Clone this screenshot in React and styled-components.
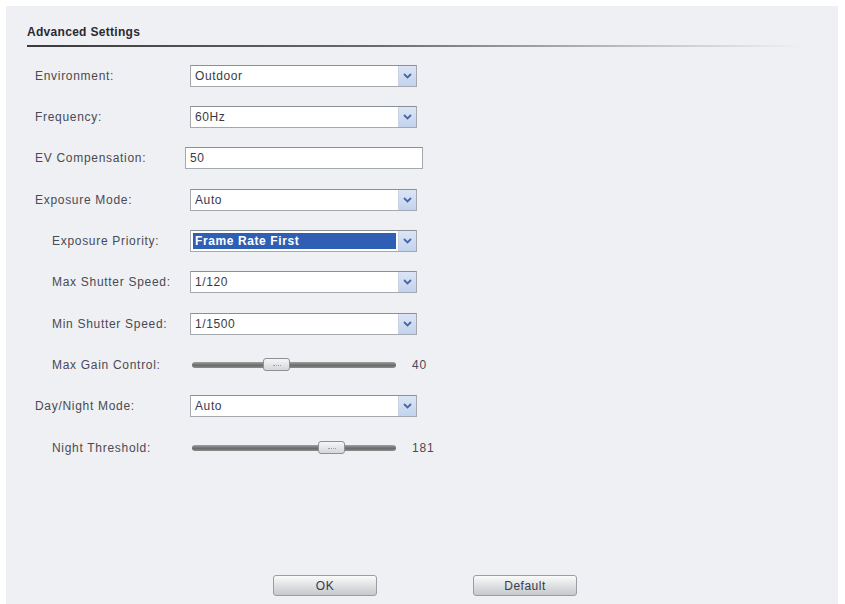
import React from 'react'
import styled, { createGlobalStyle } from 'styled-components'

const GlobalStyle = createGlobalStyle`
  html, body {
    margin: 0;
    padding: 0;
    background: #ffffff;
  }
  body {
    font-family: "Liberation Sans", Arial, sans-serif;
    color: #3a3a40;
  }
`

const fields = [
  { label: 'Environment:', type: 'select', value: 'Outdoor' },
  { label: 'Frequency:', type: 'select', value: '60Hz' },
  { label: 'EV Compensation:', type: 'input', value: '50' },
  { label: 'Exposure Mode:', type: 'select', value: 'Auto' },
  { label: 'Exposure Priority:', type: 'select', value: 'Frame Rate First', sub: true, active: true },
  { label: 'Max Shutter Speed:', type: 'select', value: '1/120', sub: true },
  { label: 'Min Shutter Speed:', type: 'select', value: '1/1500', sub: true },
  { label: 'Max Gain Control:', type: 'slider', value: 40, max: 100, sub: true },
  { label: 'Day/Night Mode:', type: 'select', value: 'Auto' },
  { label: 'Night Threshold:', type: 'slider', value: 181, max: 255, sub: true },
]

const Chevron = () => (
  <svg width="9" height="6" viewBox="0 0 9 6">
    <path d="M1 1 L4.5 4.5 L8 1" fill="none" stroke="#4a66a6" strokeWidth="1.8" />
  </svg>
)

const Dropdown = ({ value, active }) => (
  <Select>
    <SelectText $active={active}>{value}</SelectText>
    <SelectButton>
      <Chevron />
    </SelectButton>
  </Select>
)

const TRACK = 204
const THUMB = 27

const Slider = ({ value, max }) => (
  <SliderWrap>
    <Track>
      <Thumb style={{ left: Math.round((value / max) * (TRACK - THUMB)) }} />
    </Track>
    <SliderValue>{value}</SliderValue>
  </SliderWrap>
)

export default function App() {
  return (
    <>
      <GlobalStyle />
      <Panel>
        <Header>Advanced Settings</Header>
        <Form>
          {fields.map((f, i) => (
            <Row key={i}>
              <Label $sub={f.sub}>{f.label}</Label>
              {f.type === 'select' && <Dropdown value={f.value} active={f.active} />}
              {f.type === 'input' && <TextInput defaultValue={f.value} />}
              {f.type === 'slider' && <Slider value={f.value} max={f.max} />}
            </Row>
          ))}
        </Form>
        <Buttons>
          <Button>OK</Button>
          <Button>Default</Button>
        </Buttons>
      </Panel>
    </>
  )
}

const Panel = styled.div`
  margin: 6px 7px 0 6px;
  height: 598px;
  background: #eef0f3;
  padding: 19px 0 0 21px;
  box-sizing: border-box;
`

const Header = styled.div`
  width: 774px;
  padding: 0 0 6px 0;
  font-size: 12px;
  font-weight: bold;
  line-height: 14px;
  letter-spacing: 0.3px;
  color: #2a2a30;
  border-bottom: 2px solid transparent;
  border-image: linear-gradient(to right, #3a3a3a 0%, #6a6a6a 45%, #c0c4c8 80%, #eef0f3 100%) 1;
`

const Form = styled.div`
  display: flex;
  flex-direction: column;
  margin-top: 8px;
  padding-left: 8px;
`

const Row = styled.div`
  display: grid;
  grid-template-columns: 153px auto;
  align-items: center;
  height: 41.35px;
`

const Label = styled.div`
  font-size: 12px;
  letter-spacing: 0.7px;
  color: #4a4a54;
  padding-left: ${(p) => (p.$sub ? '17px' : '0')};
`

const Select = styled.div`
  display: flex;
  align-items: stretch;
  width: 227px;
  height: 22px;
  margin-left: 2px;
  box-sizing: border-box;
  background: #ffffff;
  border: 1px solid #a4a9b0;
  border-top-color: #8a9098;
`

const SelectText = styled.div`
  flex: 1;
  display: flex;
  align-items: center;
  margin: 2px;
  padding-left: 2px;
  font-size: 12px;
  letter-spacing: 0.6px;
  color: ${(p) => (p.$active ? '#ffffff' : '#3a3a42')};
  background: ${(p) => (p.$active ? '#2f5fb4' : 'transparent')};
  font-weight: ${(p) => (p.$active ? 'bold' : 'normal')};
`

const SelectButton = styled.div`
  width: 17px;
  display: flex;
  align-items: center;
  justify-content: center;
  background: linear-gradient(#dbe5f5, #c3d3ee);
  border-left: 1px solid #c8d2e2;
`

const TextInput = styled.input`
  width: 238px;
  height: 22px;
  margin-left: -3px;
  box-sizing: border-box;
  border: 1px solid #a4a9b0;
  border-top-color: #8a9098;
  background: #ffffff;
  padding: 0 4px;
  font-family: "Liberation Sans", Arial, sans-serif;
  font-size: 12px;
  letter-spacing: 0.6px;
  color: #3a3a42;
  outline: none;
`

const SliderWrap = styled.div`
  display: flex;
  align-items: center;
  margin-left: 4px;
`

const Track = styled.div`
  position: relative;
  width: ${TRACK}px;
  height: 6px;
  border-radius: 3px;
  background: linear-gradient(#a0a0a0, #6a6a6a 55%, #8c8c8c);
`

const Thumb = styled.div`
  position: absolute;
  top: -4px;
  width: ${THUMB}px;
  height: 13px;
  box-sizing: border-box;
  border: 1px solid #8d9196;
  border-radius: 3px;
  background: linear-gradient(#f4f5f6, #d4d7da);
  &::after {
    content: '';
    position: absolute;
    left: 9px;
    top: 6px;
    width: 8px;
    height: 1px;
    border-top: 1px dotted #9aa0a6;
  }
`

const SliderValue = styled.div`
  margin-left: 16px;
  font-size: 12px;
  letter-spacing: 0.8px;
  color: #4a4a54;
`

const Buttons = styled.div`
  display: flex;
  justify-content: center;
  gap: 96px;
  margin-top: 107px;
  padding-right: 15px;
`

const Button = styled.button`
  width: 104px;
  height: 21px;
  border: 1px solid #9a9ea4;
  border-radius: 3px;
  background: linear-gradient(#fbfbfb, #dcdee0 55%, #c6c9cc);
  font-family: "Liberation Sans", Arial, sans-serif;
  font-size: 12px;
  letter-spacing: 0.5px;
  color: #3a3a48;
  padding: 0;
`
